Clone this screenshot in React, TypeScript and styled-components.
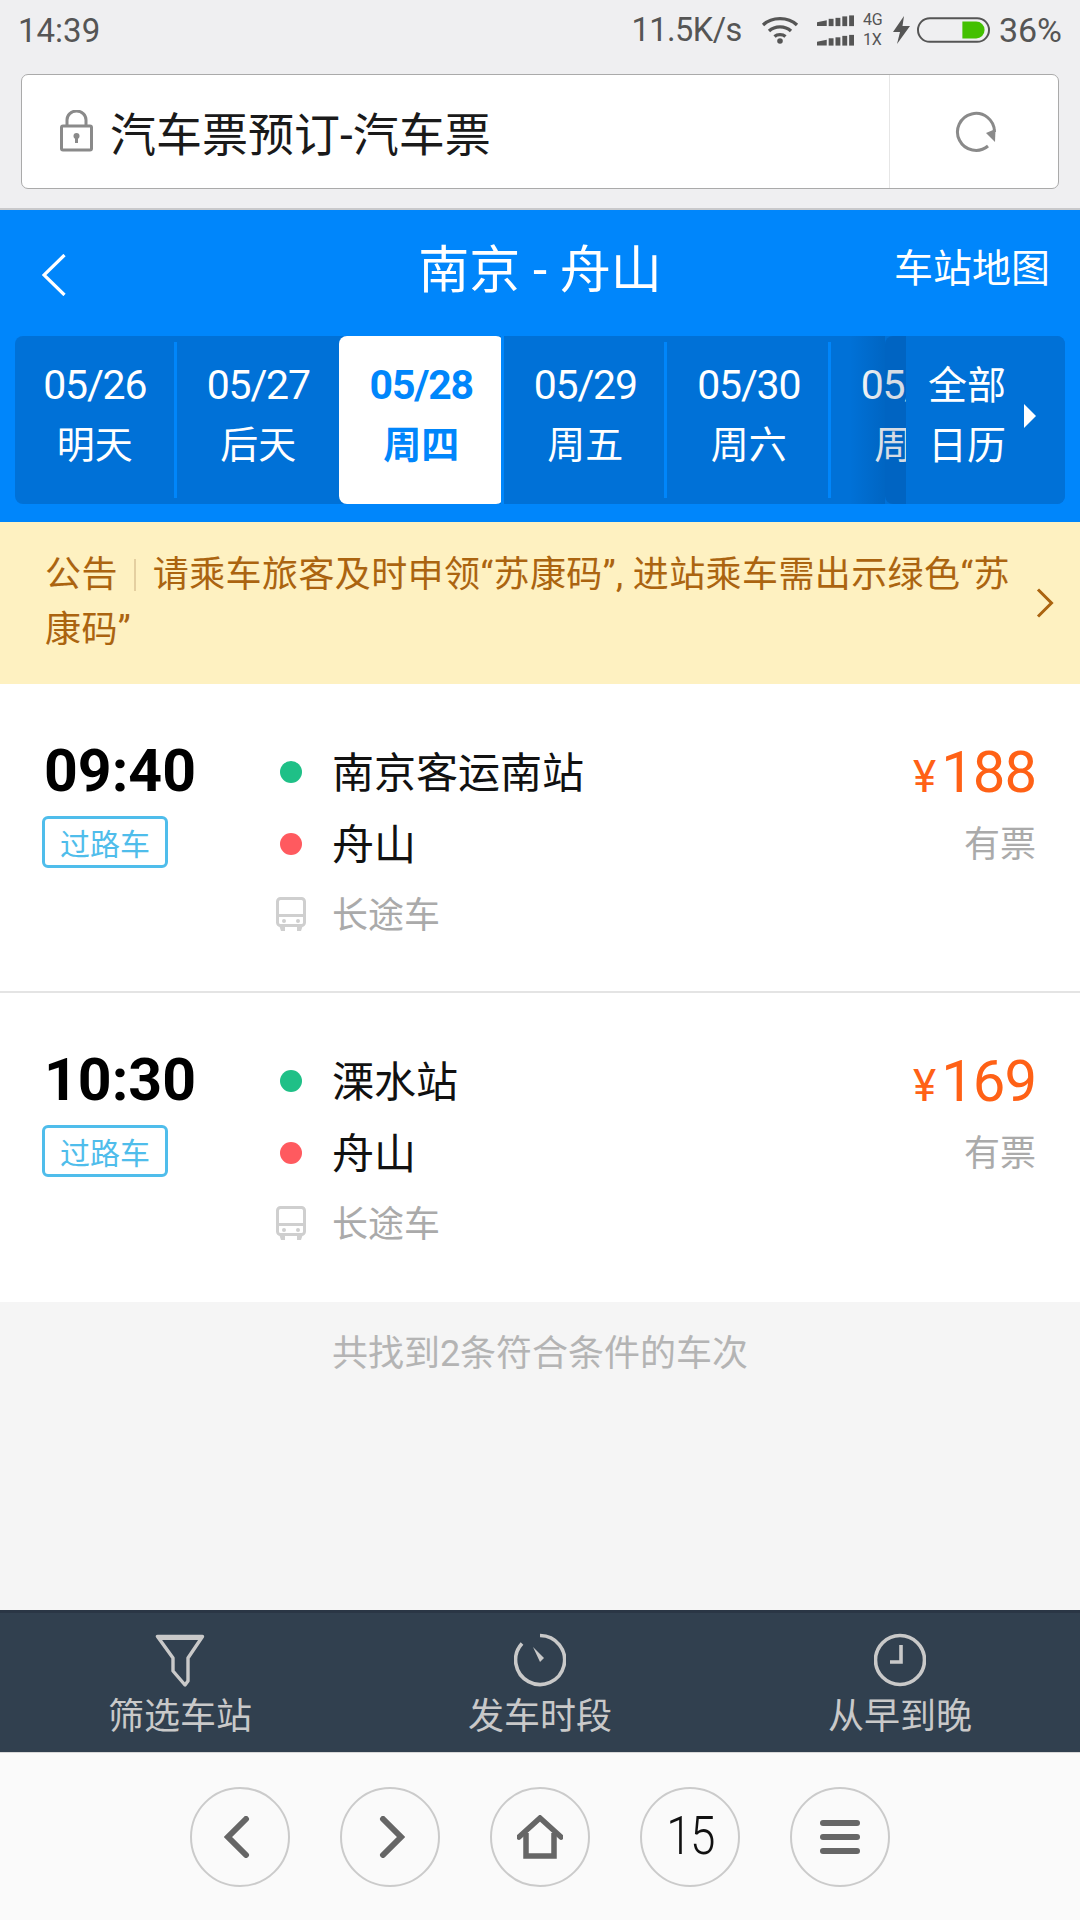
import React from "react";
import styled, { createGlobalStyle } from "styled-components";

const FONT = `Roboto, "Noto Sans CJK SC", "Noto Sans", sans-serif`;

const GlobalStyle = createGlobalStyle`
  html, body {
    margin: 0;
    padding: 0;
    background: #f5f5f5;
  }
  * {
    box-sizing: border-box;
  }
`;

const Page = styled.div`
  width: 1080px;
  height: 1920px;
  display: flex;
  flex-direction: column;
  overflow: hidden;
  font-family: ${FONT};
  background: #f5f5f5;
`;

/* top chrome */
const Chrome = styled.div`
  height: 210px;
  background: #efeff1;
  border-bottom: 2px solid #c9c9cb;
`;

const StatusBar = styled.div`
  height: 74px;
  padding: 0 18px 14px 18px;
  display: flex;
  align-items: center;
  justify-content: space-between;
  color: #555;
`;

const StatusTime = styled.div`
  font-size: 33px;
`;

const StatusRight = styled.div`
  display: flex;
  align-items: center;
`;

const StatusSlot = styled.div<{ $gap: number }>`
  display: flex;
  margin-right: ${(p) => p.$gap}px;
`;

const Speed = styled.div`
  font-size: 32.5px;
  letter-spacing: -0.5px;
  margin-right: 19px;
`;

const NetLabels = styled.div`
  display: flex;
  flex-direction: column;
  gap: 6px;
  font-size: 16px;
  line-height: 14px;
  margin-right: 9px;
  width: 21px;
`;

const BatteryPct = styled.div`
  font-size: 34px;
  margin-left: 9px;
`;

const UrlBox = styled.div`
  height: 115px;
  margin: 0 21px;
  display: flex;
  background: #fff;
  border: 1.5px solid #aaa;
  border-radius: 7px;
`;

const UrlMain = styled.div`
  flex: 1;
  display: flex;
  align-items: center;
  padding-left: 38px;
  gap: 17px;
  font-size: 46px;
  color: #1a1a1a;
  padding-bottom: 2px;
`;

const UrlReload = styled.div`
  width: 169px;
  border-left: 1px solid #e6e6e6;
  display: flex;
  align-items: center;
  justify-content: center;
  padding-left: 4px;
`;

/* blue header */
const Header = styled.div`
  height: 312px;
  background: #0086fb;
  display: flex;
  flex-direction: column;
`;

const TitleRow = styled.div`
  height: 126px;
  padding: 0 30px;
  display: grid;
  grid-template-columns: 1fr auto 1fr;
  align-items: center;
  color: #fff;
`;

const BackSlot = styled.div`
  display: flex;
  margin: 4px 0 0 12px;
`;

const TitleText = styled.div`
  font-size: 51px;
  margin-bottom: 14px;
`;

const MapLink = styled.div`
  font-size: 39px;
  justify-self: end;
  margin-bottom: 16px;
`;

const DateStrip = styled.div`
  position: relative;
  height: 168px;
  margin: 0 15px;
  border-radius: 8px;
  background: #0071d7;
  display: flex;
  overflow: hidden;
`;

const DateTab = styled.div<{ $active?: boolean; $noDivider?: boolean; $first?: boolean }>`
  position: relative;
  flex: 0 0 ${(p) => (p.$active ? "164.5px" : "163.5px")};
  margin-left: ${(p) => (p.$first ? "-2px" : p.$active ? "-1px" : "0")};
  padding: 25px 0 0 0;
  text-align: center;
  color: ${(p) => (p.$active ? "#0086fb" : "#fff")};
  font-weight: ${(p) => (p.$active ? 700 : 400)};
  background: ${(p) =>
    p.$active ? "linear-gradient(#fff, #fff) left / 162px 100% no-repeat" : "none"};
  border-radius: 8px;

  &::after {
    content: "";
    display: ${(p) => (p.$noDivider ? "none" : "block")};
    position: absolute;
    right: 0;
    top: ${(p) => (p.$active ? "0" : "6px")};
    bottom: ${(p) => (p.$active ? "0" : "6px")};
    width: 3px;
    background: #0086fb;
  }
`;

const TabDate = styled.div`
  font-size: 41px;
  line-height: 48px;
  letter-spacing: -1.2px;
`;

const TabDay = styled.div`
  font-size: 38px;
  line-height: 48px;
  margin-top: 12px;
`;

const CalendarPanel = styled.div`
  position: absolute;
  top: 0;
  right: 0;
  bottom: 0;
  width: 159px;
  background: #0071d7;
  border-radius: 0 8px 8px 0;
  color: #fff;
  display: flex;
  align-items: center;
  padding-left: 22px;
  gap: 18px;

  &::before {
    content: "";
    position: absolute;
    top: 0;
    bottom: 0;
    left: -56px;
    width: 35px;
    background: linear-gradient(to right, rgba(0, 40, 90, 0), rgba(0, 40, 90, 0.16));
  }

  &::after {
    content: "";
    position: absolute;
    top: 0;
    bottom: 0;
    left: -21px;
    width: 21px;
    background: rgba(0, 40, 90, 0.16);
    border-radius: 8px 0 0 8px;
  }
`;

const CalendarText = styled.div`
  font-size: 39px;
  line-height: 60px;
  margin-bottom: 8px;
`;

const CalendarArrow = styled.div`
  width: 0;
  height: 0;
  border-left: 12px solid #fff;
  border-top: 12px solid transparent;
  border-bottom: 12px solid transparent;
  margin-bottom: 8px;
`;

/* notice */
const Notice = styled.div`
  height: 162px;
  background: #fef1c1;
  padding: 0 26px 0 45px;
  display: flex;
  align-items: center;
  color: #ab6410;
`;

const NoticeText = styled.div`
  flex: 1;
  font-size: 36px;
  line-height: 55px;
  letter-spacing: 0.4px;
`;

const NoticeLabel = styled.span`
  &::after {
    content: "";
    display: inline-block;
    width: 2px;
    height: 32px;
    margin: 0 17px 0 16px;
    vertical-align: -4px;
    background: #e4cfa0;
  }
`;

/* trips */
const TripRow = styled.div<{ $divider?: boolean }>`
  height: 309px;
  background: #fff;
  border-bottom: ${(p) => (p.$divider ? "2px solid #e4e4e4" : "none")};
  padding: 52px 44px 0 42px;
  display: grid;
  grid-template-columns: 234px 1fr auto;
`;

const TimeCol = styled.div`
  display: flex;
  flex-direction: column;
  align-items: flex-start;
`;

const DepartTime = styled.div`
  font-size: 59px;
  font-weight: 700;
  line-height: 70px;
  color: #000;
  margin-left: 2px;
`;

const TypeTag = styled.div`
  margin-top: 10px;
  width: 126px;
  height: 52px;
  border: 3px solid #4fbdeb;
  border-radius: 6px;
  color: #4fbdeb;
  font-size: 30px;
  display: flex;
  align-items: center;
  justify-content: center;
`;

const RouteCol = styled.div`
  display: flex;
  flex-direction: column;
`;

const RouteLine = styled.div`
  height: 72px;
  display: flex;
  align-items: center;
  gap: 26px;

  &:last-child {
    height: 68px;
  }
`;

const IconSlot = styled.div`
  width: 30px;
  display: flex;
  justify-content: center;
`;

const Dot = styled.div<{ $color: string }>`
  width: 22px;
  height: 22px;
  border-radius: 50%;
  background: ${(p) => p.$color};
`;

const StationName = styled.div`
  font-size: 42px;
  color: #111;
  margin-bottom: 6px;
`;

const CoachType = styled.div`
  font-size: 36px;
  color: #aaa;
  margin-bottom: 4px;
`;

const PriceCol = styled.div`
  display: flex;
  flex-direction: column;
  align-items: flex-end;
`;

const Price = styled.div`
  height: 70px;
  display: flex;
  align-items: baseline;
  color: #ff6116;
  font-size: 58px;
  line-height: 72px;
  letter-spacing: -1px;
`;

const Yen = styled.span`
  font-size: 44px;
  margin-right: 6px;
`;

const TicketState = styled.div`
  font-size: 36px;
  line-height: 72px;
  color: #aaa;
  margin-top: 3px;
`;

const ResultNote = styled.div`
  flex: 1;
  padding-top: 27px;
  text-align: center;
  font-size: 36px;
  line-height: 50px;
  color: #b4b4b4;
`;

/* filter bar */
const FilterBar = styled.div`
  height: 142px;
  background: #31404f;
  border-top: 3px solid #2a3645;
  display: grid;
  grid-template-columns: repeat(3, 1fr);
`;

const FilterItem = styled.div`
  display: flex;
  flex-direction: column;
  align-items: center;
  padding-top: 20px;
  color: #c9c9c9;
  font-size: 36px;
  line-height: 50px;
`;

const FilterLabel = styled.div`
  margin-top: 5px;
`;

/* browser bar */
const BrowserBar = styled.div`
  height: 168px;
  background: #fafafa;
  border-top: 1px solid #d8d8d8;
  display: flex;
  align-items: flex-start;
  justify-content: center;
  gap: 50px;
  padding-top: 34px;
`;

const RoundButton = styled.div<{ $shift?: number }>`
  width: 100px;
  height: 100px;
  border-radius: 50%;
  border: 2px solid #cbcbcb;
  display: flex;
  align-items: center;
  justify-content: center;
  padding-left: ${(p) => (p.$shift && p.$shift > 0 ? p.$shift * 2 : 0)}px;
  padding-right: ${(p) => (p.$shift && p.$shift < 0 ? -p.$shift * 2 : 0)}px;
`;

const TabCount = styled.div`
  font-size: 54px;
  font-weight: 300;
  color: #111;
  letter-spacing: -2px;
  transform: scaleX(0.85);
  margin-bottom: 3px;
`;

const WifiIcon = () => (
  <svg width="38" height="28" viewBox="0 0 38 28" fill="none" stroke="#555" strokeWidth="3.4">
    <path d="M2 9 C11 0.5 27 0.5 36 9" />
    <path d="M8 15 C14 9.5 24 9.5 30 15" />
    <path d="M13.5 20.5 C16.5 18 21.5 18 24.5 20.5" />
    <circle cx="19" cy="25" r="2.8" fill="#555" stroke="none" />
  </svg>
);

const SignalIcon = () => (
  <svg width="37" height="31" viewBox="0 0 38 31" fill="#555">
    <path d="M0 7 L10 5 V11 H0 Z" />
    <rect x="12" y="3.5" width="5" height="7.5" />
    <rect x="19" y="2.5" width="5" height="8.5" />
    <rect x="26" y="1" width="5" height="10" />
    <rect x="33" y="0" width="5" height="11" />
    <path d="M0 27 L10 25 V31 H0 Z" />
    <rect x="12" y="23.5" width="5" height="7.5" />
    <rect x="19" y="22.5" width="5" height="8.5" />
    <rect x="26" y="21" width="5" height="10" />
    <rect x="33" y="20" width="5" height="11" />
  </svg>
);

const BoltIcon = () => (
  <svg width="17" height="28" viewBox="0 0 17 28" fill="#555">
    <path d="M11 0 L0 16 H7 L4 28 L17 10 H9.5 Z" />
  </svg>
);

const BatteryIcon = () => (
  <svg width="73" height="26" viewBox="0 0 74 26">
    <rect x="1" y="1" width="72" height="24" rx="12" fill="none" stroke="#555" strokeWidth="2" />
    <path d="M46 4.5 H60 A8.5 8.5 0 0 1 60 21.5 H46 Z" fill="#43c000" />
  </svg>
);

const LockIcon = () => (
  <svg width="33" height="42" viewBox="0 0 33 42" fill="none" stroke="#8a8a8a" strokeWidth="3">
    <rect x="1.5" y="16" width="30" height="24" rx="1.5" />
    <path d="M7 16 V10 A9.5 9 0 0 1 26 10 V16" />
    <circle cx="16.5" cy="26" r="3" fill="#8a8a8a" stroke="none" />
    <rect x="15" y="27" width="3" height="6" fill="#8a8a8a" stroke="none" />
  </svg>
);

const ReloadIcon = () => (
  <svg width="42" height="42" viewBox="0 0 42 42" fill="none">
    <path d="M33 35 A18.5 18.5 0 1 1 39.5 21" stroke="#8a8a8a" strokeWidth="3" />
    <path d="M31 22 L40.5 18 L40 31 Z" fill="#8a8a8a" />
  </svg>
);

const BackIcon = () => (
  <svg width="24" height="42" viewBox="0 0 24 42" fill="none" stroke="#fff" strokeWidth="3.2">
    <path d="M22.5 1 L2 21 L22.5 41" />
  </svg>
);

const NoticeArrow = () => (
  <svg width="18" height="30" viewBox="0 0 18 30" fill="none" stroke="#ab6410" strokeWidth="3">
    <path d="M2 1.5 L15.5 15 L2 28.5" />
  </svg>
);

const BusIcon = () => (
  <svg width="30" height="34" viewBox="0 0 30 34" fill="none">
    <rect x="1.5" y="1.5" width="27" height="27" rx="3" stroke="#cfcfcf" strokeWidth="3" />
    <rect x="1.5" y="17" width="27" height="3" fill="#cfcfcf" />
    <path d="M3 28 H9 V34 H5 Z M21 28 H27 L25 34 H21 Z" fill="#cfcfcf" />
    <circle cx="8" cy="24" r="2" fill="#cfcfcf" />
    <circle cx="22" cy="24" r="2" fill="#cfcfcf" />
  </svg>
);

const FilterIcon = () => (
  <svg width="50" height="54" viewBox="0 0 50 54" fill="none" stroke="#c9c9c9" strokeWidth="3.4">
    <path d="M2.5 3.5 H47.5 L33 25 V48 L30 52 L18 38 V25 Z" strokeLinejoin="round" />
    <rect x="3" y="2" width="44" height="5" fill="#c9c9c9" stroke="none" />
  </svg>
);

const TimerIcon = () => (
  <svg width="52" height="54" viewBox="0 0 52 54" fill="none" stroke="#c9c9c9" strokeWidth="3.6">
    <path d="M26 2.5 A24.5 24.5 0 1 1 8 10.5" />
    <path d="M19 14 L30 25 L26 29 Z" fill="#c9c9c9" stroke="none" />
  </svg>
);

const ClockIcon = () => (
  <svg width="52" height="54" viewBox="0 0 52 54" fill="none" stroke="#c9c9c9" strokeWidth="3.6">
    <circle cx="26" cy="27" r="24.5" />
    <path d="M27 12 V29 H16" />
  </svg>
);

const NavBack = () => (
  <svg width="26" height="42" viewBox="0 0 26 42" fill="none" stroke="#666" strokeWidth="6" strokeLinecap="round">
    <path d="M22 3 L4 21 L22 39" />
  </svg>
);

const NavForward = () => (
  <svg width="26" height="42" viewBox="0 0 26 42" fill="none" stroke="#666" strokeWidth="6" strokeLinecap="round">
    <path d="M4 3 L22 21 L4 39" />
  </svg>
);

const NavHome = () => (
  <svg width="46" height="44" viewBox="0 0 46 44" fill="none" stroke="#666" strokeWidth="5.5">
    <path d="M2 22 L23 3 L44 22" strokeLinecap="round" />
    <path d="M9 18 V41 H37 V18" />
  </svg>
);

const NavMenu = () => (
  <svg width="40" height="34" viewBox="0 0 40 34" fill="#666">
    <rect x="0" y="0" width="40" height="6" rx="3" />
    <rect x="0" y="14" width="40" height="6" rx="3" />
    <rect x="0" y="28" width="40" height="6" rx="3" />
  </svg>
);

const dates = [
  { date: "05/26", day: "明天" },
  { date: "05/27", day: "后天" },
  { date: "05/28", day: "周四" },
  { date: "05/29", day: "周五" },
  { date: "05/30", day: "周六" },
  { date: "05/31", day: "周日" },
];

const trips = [
  { time: "09:40", from: "南京客运南站", price: "188" },
  { time: "10:30", from: "溧水站", price: "169" },
];

const App: React.FC = () => {
  return (
    <Page>
      <GlobalStyle />
      <Chrome>
        <StatusBar>
          <StatusTime>14:39</StatusTime>
          <StatusRight>
            <Speed>11.5K/s</Speed>
            <StatusSlot $gap={18}>
              <WifiIcon />
            </StatusSlot>
            <StatusSlot $gap={9}>
              <SignalIcon />
            </StatusSlot>
            <NetLabels>
              <span>4G</span>
              <span>1X</span>
            </NetLabels>
            <StatusSlot $gap={7}>
              <BoltIcon />
            </StatusSlot>
            <BatteryIcon />
            <BatteryPct>36%</BatteryPct>
          </StatusRight>
        </StatusBar>
        <UrlBox>
          <UrlMain>
            <LockIcon />
            汽车票预订-汽车票
          </UrlMain>
          <UrlReload>
            <ReloadIcon />
          </UrlReload>
        </UrlBox>
      </Chrome>

      <Header>
        <TitleRow>
          <BackSlot>
            <BackIcon />
          </BackSlot>
          <TitleText>南京 - 舟山</TitleText>
          <MapLink>车站地图</MapLink>
        </TitleRow>
        <DateStrip>
          {dates.map((d, i) => (
            <DateTab key={d.date} $first={i === 0} $active={i === 2} $noDivider={i === 1}>
              <TabDate>{d.date}</TabDate>
              <TabDay>{d.day}</TabDay>
            </DateTab>
          ))}
          <CalendarPanel>
            <CalendarText>
              全部
              <br />
              日历
            </CalendarText>
            <CalendarArrow />
          </CalendarPanel>
        </DateStrip>
      </Header>

      <Notice>
        <NoticeText>
          <NoticeLabel>公告</NoticeLabel>
          请乘车旅客及时申领“苏康码”, 进站乘车需出示绿色“苏康码”
        </NoticeText>
        <NoticeArrow />
      </Notice>

      {trips.map((t, i) => (
        <TripRow key={t.time} $divider={i === 0}>
          <TimeCol>
            <DepartTime>{t.time}</DepartTime>
            <TypeTag>过路车</TypeTag>
          </TimeCol>
          <RouteCol>
            <RouteLine>
              <IconSlot>
                <Dot $color="#1fc087" />
              </IconSlot>
              <StationName>{t.from}</StationName>
            </RouteLine>
            <RouteLine>
              <IconSlot>
                <Dot $color="#ff5a5f" />
              </IconSlot>
              <StationName>舟山</StationName>
            </RouteLine>
            <RouteLine>
              <IconSlot>
                <BusIcon />
              </IconSlot>
              <CoachType>长途车</CoachType>
            </RouteLine>
          </RouteCol>
          <PriceCol>
            <Price>
              <Yen>¥</Yen>
              {t.price}
            </Price>
            <TicketState>有票</TicketState>
          </PriceCol>
        </TripRow>
      ))}

      <ResultNote>共找到2条符合条件的车次</ResultNote>

      <FilterBar>
        <FilterItem>
          <FilterIcon />
          <FilterLabel>筛选车站</FilterLabel>
        </FilterItem>
        <FilterItem>
          <TimerIcon />
          <FilterLabel>发车时段</FilterLabel>
        </FilterItem>
        <FilterItem>
          <ClockIcon />
          <FilterLabel>从早到晚</FilterLabel>
        </FilterItem>
      </FilterBar>

      <BrowserBar>
        <RoundButton $shift={-3}>
          <NavBack />
        </RoundButton>
        <RoundButton $shift={2}>
          <NavForward />
        </RoundButton>
        <RoundButton>
          <NavHome />
        </RoundButton>
        <RoundButton>
          <TabCount>15</TabCount>
        </RoundButton>
        <RoundButton>
          <NavMenu />
        </RoundButton>
      </BrowserBar>
    </Page>
  );
};

export default App;
